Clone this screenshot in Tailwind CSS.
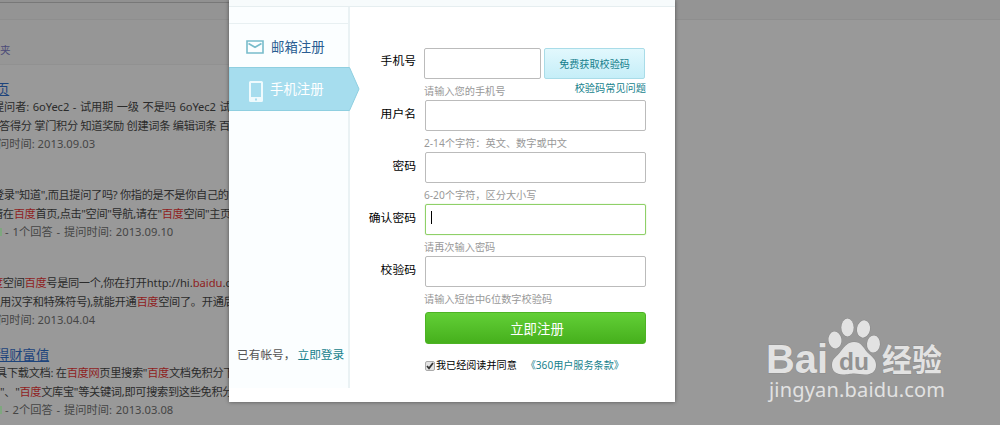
<!DOCTYPE html>
<html lang="zh-CN">
<head>
    <meta charset="UTF-8">
    <meta name="viewport" content="width=device-width, initial-scale=1.0">
    <title>手机注册</title>
    <script src="https://cdn.jsdelivr.net/npm/@tailwindcss/browser@4"></script>
</head>
<body class="relative h-[425px] w-[1000px] overflow-hidden bg-[#999] font-['Noto_Sans','Noto_Sans_CJK_SC',sans-serif] text-black">
    <!-- dimmed search results -->
    <header class="h-5 border-b border-[#8e8e8e] bg-[#949494]">
        <div class="h-[3px] w-[229px] border-b border-[#787878] bg-[#919191]"></div>
    </header>
    <main class="w-[229px] overflow-hidden whitespace-nowrap text-[11.2px] text-[#2b2b2b]">
        <div class="h-[45px] border-b border-[#919191] bg-[#969696] pt-[21px] text-[10.5px] leading-[18px] text-[#4b4a78]"><p>夹</p></div>
        <section class="h-[121px] pt-4">
            <h3 class="-ml-1 h-[17px] text-[13.3px] leading-[17px] text-[#1d447c] underline">页</h3>
            <p class="-ml-[7px] h-[18.5px] leading-[18.5px] tracking-[-0.1px] [word-spacing:0.8px]">提问者: 6oYec2 - 试用期 一级 不是吗 6oYec2 试用</p>
            <p class="-ml-px h-[18.5px] leading-[18.5px] tracking-[-0.3px]">答得分 掌门积分 知道奖励 创建词条 编辑词条 百度</p>
            <p class="-ml-[2px] h-[18.5px] leading-[18.5px] tracking-[0.03px] text-[#454545]">问时间: 2013.09.03</p>
        </section>
        <section class="h-[88px]">
            <p class="-ml-[7px] h-[18.5px] leading-[18.5px] tracking-[-0.32px]">登录"知道",而且提问了吗? 你指的是不是你自己的</p>
            <p class="-ml-[8px] h-[18.5px] leading-[18.5px] tracking-[-0.35px]">请在<span class="text-[#8f1d1d]">百度</span>首页,点击"空间"导航,请在"<span class="text-[#8f1d1d]">百度</span>空间"主页</p>
            <p class="flex h-[18.5px] items-center leading-[18.5px] tracking-[0.02px] text-[#454545] [word-spacing:1px]"><i class="mr-[3px] h-2 w-[2px] bg-[#7fa77f]"></i>- 1个回答 - 提问时间: 2013.09.10</p>
        </section>
        <section class="h-[73px]">
            <p class="-ml-[8px] h-[18.5px] leading-[18.5px] tracking-[-0.33px]"><span class="text-[#8f1d1d]">度</span>空间<span class="text-[#8f1d1d]">百度</span>号是同一个,你在打开<span class="tracking-normal">http://hi.<span class="text-[#8f1d1d]">baidu</span>.com</span></p>
            <p class="h-[18.5px] leading-[18.5px] tracking-[-0.3px]">用汉字和特殊符号),就能开通<span class="text-[#8f1d1d]">百度</span>空间了。开通后</p>
            <p class="-ml-[2px] h-[18.5px] leading-[18.5px] tracking-[0.03px] text-[#454545]">问时间: 2013.04.04</p>
        </section>
        <section>
            <h3 class="-ml-1 h-[17px] text-[13.3px] leading-[17px] text-[#1d447c] underline">得财富值</h3>
            <p class="-ml-[4px] h-[18.5px] leading-[18.5px] tracking-[-0.3px]">具下载文档: 在<span class="text-[#8f1d1d]">百度网</span>页里搜索"<span class="text-[#8f1d1d]">百度</span>文档免积分下</p>
            <p class="h-[18.5px] leading-[18.5px] tracking-[-0.3px]">"、"<span class="text-[#8f1d1d]">百度</span>文库宝"等关键词,即可搜索到这些免积分</p>
            <p class="flex h-[18.5px] items-center leading-[18.5px] tracking-[0.02px] text-[#454545] [word-spacing:1px]"><i class="mr-[3px] h-2 w-[2px] bg-[#7fa77f]"></i>- 2个回答 - 提问时间: 2013.03.08</p>
        </section>
    </main>

    <!-- registration dialog -->
    <div class="absolute top-0 left-[229px] h-[402px] w-[446px] bg-white shadow-[0_0_4px_rgba(0,0,0,0.45)]">
        <div class="h-[7px] border-b border-[#e6eef0] bg-[#f7fbfc]"></div>
        <div class="flex">
            <aside class="relative h-[381px] w-[121px] border-r-2 border-[#eaf2f4] bg-[#fbfeff]">
                <div class="h-[17px] border-b border-[#e8f0f2]"></div>
                <a class="flex h-[43px] items-center pt-[3px] pl-[17px] text-[13.4px] text-[#2a5d92]">
                    <svg class="mr-[7px] h-[14px] w-[18px]" viewBox="0 0 18 14" fill="none" stroke="#78bccb" stroke-width="1.6"><path d="M1 1h16v12H1zM2.5 3.5L9 7.3l6.5-3.8"/></svg>邮箱注册
                </a>
                <a class="relative flex h-11 w-[131px] items-center pl-[20px] text-[13.4px] text-white">
                    <svg class="absolute top-0 left-0 h-11 w-[131px]" viewBox="0 0 131 44"><path d="M0 .5H120.500L130 22 120.500 43.500H0z" fill="#a6ddee" stroke="#8fcfe0"/></svg>
                    <svg class="relative mt-1 mr-[7px] h-[21px] w-[14px]" viewBox="0 0 14 21"><path fill="#eefafd" fill-rule="evenodd" d="M1.500 0h11Q14 0 14 1.500v18q0 1.500-1.500 1.500h-11Q0 21 0 19.500v-18Q0 0 1.500 0zM2 2v14h10V2zM6 17.500v2h2v-2z"/></svg>
                    <span class="relative">手机注册</span>
                </a>
                <p class="mt-[233px] pl-[8px] text-[11.7px] leading-5 whitespace-nowrap text-[#555]">已有帐号， <a class="-ml-px text-[#167f8c]">立即登录</a></p>
            </aside>
            <form class="ml-[10px] w-[287px] pt-[41px] text-[11.8px]">
                <div class="flex h-[52px]">
                    <label class="w-[56px] pt-[4px] text-right leading-4">手机号</label>
                    <div class="ml-[8px] w-[222px]">
                        <div class="flex gap-[3px]">
                            <div class="h-[31px] w-[117px] rounded-xs border border-[#bbb] bg-white"></div>
                            <button type="button" class="h-[31px] w-[101px] rounded-xs border border-[#a9dce8] bg-linear-to-b from-[#e2f8fd] to-[#c5eef8] pt-[3px] text-[10.1px] text-[#167f8c]">免费获取校验码</button>
                        </div>
                        <div class="flex justify-between text-[10.2px] leading-4">
                            <span class="pt-[4px] text-[#999]">请输入您的手机号</span>
                            <a class="pt-px text-[#167f8c]">校验码常见问题</a>
                        </div>
                    </div>
                </div>
                <div class="flex h-[52px]">
                    <label class="w-[56px] pt-[5px] text-right leading-4">用户名</label>
                    <div class="ml-[8px] w-[222px]">
                        <div class="ml-px h-[31px] rounded-xs border border-[#bbb]"></div>
                        <p class="pt-[4px] text-[10.2px] leading-4 text-[#999]">2-14个字符：英文、数字或中文</p>
                    </div>
                </div>
                <div class="flex h-[52px]">
                    <label class="w-[56px] pt-[5px] text-right leading-4">密码</label>
                    <div class="ml-[8px] w-[222px]">
                        <div class="ml-px h-[31px] rounded-xs border border-[#bbb]"></div>
                        <p class="pt-[4px] text-[10.2px] leading-4 text-[#999]">6-20个字符，区分大小写</p>
                    </div>
                </div>
                <div class="flex h-[52px]">
                    <label class="w-[56px] pt-[5px] text-right leading-4">确认密码</label>
                    <div class="ml-[8px] w-[222px]">
                        <div class="ml-px h-[31px] rounded-xs border border-[#8fd068] pt-[6px] pl-[5px] shadow-[0_0_1px_#8fd068]"><div class="h-[13px] w-px bg-black"></div></div>
                        <p class="pt-[4px] text-[10.2px] leading-4 text-[#999]">请再次输入密码</p>
                    </div>
                </div>
                <div class="flex h-[56px]">
                    <label class="w-[56px] pt-[5px] text-right leading-4">校验码</label>
                    <div class="ml-[8px] w-[222px]">
                        <div class="ml-px h-[31px] rounded-xs border border-[#bbb]"></div>
                        <p class="pt-[4px] text-[10.2px] leading-4 text-[#999]">请输入短信中6位数字校验码</p>
                    </div>
                </div>
                <button type="button" class="ml-[65px] block h-8 w-[221px] rounded-[3px] border border-[#4db324] bg-linear-to-b from-[#62cf36] to-[#46b01c] pt-[2px] pl-[3px] text-[13.4px] text-white">立即注册</button>
                <div class="ml-[65px] flex h-[42px] items-center pt-px text-[10.1px] whitespace-nowrap">
                    <svg class="mr-[1px] h-[10px] w-[10px]" viewBox="0 0 10 10"><rect x=".5" y=".5" width="9" height="9" rx="1.500" fill="#e4e4e4" stroke="#aaa"/><path d="M2 5l2 2.300L8 2" fill="none" stroke="#333" stroke-width="1.700"/></svg>
                    我已经阅读并同意
                    <a class="ml-[9px] text-[#167f8c]">《360用户服务条款》</a>
                </div>
            </form>
        </div>
    </div>

    <!-- site mark -->
    <svg class="absolute top-[312px] left-[760px] h-[100px] w-[192px]" viewBox="0 0 192 100" fill="#e2e2e2">
        <g stroke="#8b8b8b" stroke-width="1" paint-order="stroke">
            <text x="6" y="61" font-family="Liberation Sans" font-weight="bold" font-size="41" textLength="62" lengthAdjust="spacingAndGlyphs">Bai</text>
            <ellipse cx="75" cy="28" rx="6.5" ry="8.5" transform="rotate(-8 75 28)"/>
            <ellipse cx="87.5" cy="15.5" rx="6.2" ry="9"/>
            <ellipse cx="103.5" cy="17" rx="6.5" ry="8.7" transform="rotate(10 103.500 17)"/>
            <ellipse cx="113.5" cy="32" rx="6.5" ry="8.5" transform="rotate(5 113.500 32)"/>
            <path d="M94 30C101 30 103 35 107 40C112 45 116 47 116 53C116 60 111 62.500 105 62.500C101 62.500 98 61.500 94 61.500C90 61.500 88 62.500 83 62.500C76 62.500 72 59 72 53C72 46 77 45 81 39C85 34 88 30 94 30Z"/>
            <text x="122" y="58.5" font-family="Noto Sans CJK SC" font-weight="bold" font-size="31" textLength="60" lengthAdjust="spacingAndGlyphs">经验</text>
        </g>
        <text x="79" y="57.5" fill="#929292" font-family="Liberation Sans" font-weight="bold" font-size="24" textLength="30" lengthAdjust="spacingAndGlyphs">du</text>
        <text x="9" y="85" font-family="Noto Sans" font-size="20" textLength="176">jingyan.baidu.com</text>
    </svg>
</body>
</html>
